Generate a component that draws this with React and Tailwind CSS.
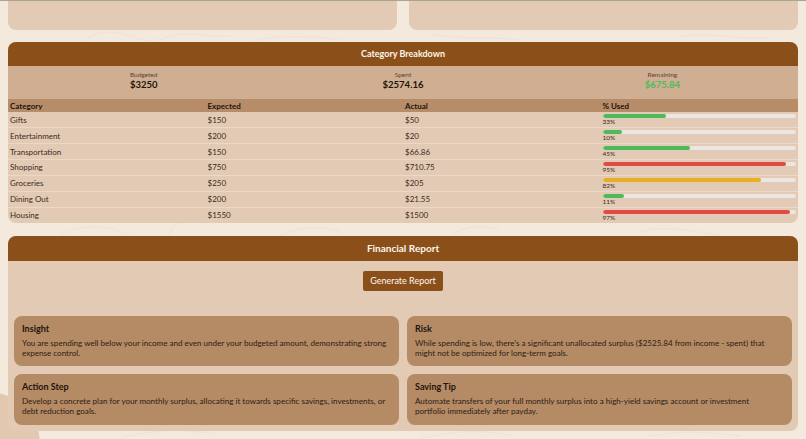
const rows = [
  { name: 'Gifts', expected: '$150', actual: '$50', pct: 33, color: 'bg-[#4dbb5c]' },
  { name: 'Entertainment', expected: '$200', actual: '$20', pct: 10, color: 'bg-[#4dbb5c]' },
  { name: 'Transportation', expected: '$150', actual: '$66.86', pct: 45, color: 'bg-[#4dbb5c]' },
  { name: 'Shopping', expected: '$750', actual: '$710.75', pct: 95, color: 'bg-[#e04b45]' },
  { name: 'Groceries', expected: '$250', actual: '$205', pct: 82, color: 'bg-[#e6b022]' },
  { name: 'Dining Out', expected: '$200', actual: '$21.55', pct: 11, color: 'bg-[#4dbb5c]' },
  { name: 'Housing', expected: '$1550', actual: '$1500', pct: 97, color: 'bg-[#e04b45]' },
]

const tips = [
  { title: 'Insight', text: 'You are spending well below your income and even under your budgeted amount, demonstrating strong expense control.' },
  { title: 'Risk', text: "While spending is low, there's a significant unallocated surplus ($2525.84 from income - spent) that might not be optimized for long-term goals." },
  { title: 'Action Step', text: 'Develop a concrete plan for your monthly surplus, allocating it towards specific savings, investments, or debt reduction goals.' },
  { title: 'Saving Tip', text: 'Automate transfers of your full monthly surplus into a high-yield savings account or investment portfolio immediately after payday.' },
]

function Summary({ label, value, green }) {
  return (
    <div className="text-center">
      <div className="text-[6.5px] leading-[9px] text-[#5a4634]">{label}</div>
      <div className={`text-[9.5px] leading-[12px] font-bold ${green ? 'text-[#4dbb5c]' : 'text-[#1e140c]'}`}>{value}</div>
    </div>
  )
}

export default function App() {
  return (
    <div className="relative h-[439px] overflow-hidden bg-[#f3e9dc] font-['Lato',sans-serif] text-[#3a2a1c]">
      <div className="absolute left-[-64px] top-[392px] h-[120px] w-[104px] rounded-full bg-[#e3c8b0]" />
      <svg className="absolute inset-0" width="806" height="439" fill="none" stroke="#efe3d5" strokeWidth="1">
        <path d="M85 42c10-12 30-12 45-6s30 6 40 0M170 36c20-6 40 2 60 0M250 42c30-8 60-6 90-2" />
        <path d="M60 236c14-12 50-12 70 0M170 236c0-6 4-10 8-13M280 236c20-10 45-10 60-4" />
        <path d="M430 34c30 6 60 2 90 6M680 36c30-4 60 4 90 2" />
        <path d="M450 236c15-10 30-12 50-6M640 232c25-8 60 0 80 4" />
        <path d="M120 439c30-10 60-10 90-6M420 439c30-8 60-10 90-4M650 436c30-6 60-4 90 0" />
      </svg>
      <div className="relative px-2">
        <div className="absolute left-0 right-0 top-0 border-t border-[#a8a595]" />
        <div className="grid grid-cols-2 gap-3">
          <div className="h-[30px] rounded-b-lg bg-[#e2cab5]" />
          <div className="h-[30px] rounded-b-lg bg-[#e2cab5]" />
        </div>

        <section className="mt-3 overflow-hidden rounded-lg bg-[#e2cab5]">
          <div className="flex h-6 items-center justify-center bg-[#8b5019] text-[9px] font-bold text-[#fdf6ee]">Category Breakdown</div>
          <div className="grid h-[33px] grid-cols-3 items-center bg-[#cfae91] px-1.5 pb-1">
            <Summary label="Budgeted" value="$3250" />
            <Summary label="Spent" value="$2574.16" />
            <Summary label="Remaining" value="$675.84" green />
          </div>
          <table className="w-full table-fixed border-collapse text-[8px]">
            <thead>
              <tr className="h-[13px] bg-[#b68d68] text-left text-[#1e140c]">
                <th className="px-0.5 font-bold">Category</th>
                <th className="px-0.5 font-bold">Expected</th>
                <th className="px-0.5 font-bold">Actual</th>
                <th className="px-0.5 font-bold">% Used</th>
              </tr>
            </thead>
            <tbody>
              {rows.map((r) => (
                <tr key={r.name} className="h-[15.85px] border-b border-[#ead9c9] last:border-b-0">
                  <td className="px-0.5">{r.name}</td>
                  <td className="px-0.5">{r.expected}</td>
                  <td className="px-0.5">{r.actual}</td>
                  <td className="px-0.5">
                    <div className="h-1 overflow-hidden rounded-full bg-[#ebe6e2]">
                      <div className={`h-full rounded-full ${r.color}`} style={{ width: `${r.pct}%` }} />
                    </div>
                    <div className="text-[6.5px] leading-[7px]">{r.pct}%</div>
                  </td>
                </tr>
              ))}
            </tbody>
          </table>
        </section>

        <section className="mt-[13px] overflow-hidden rounded-lg bg-[#e2cab5]">
          <div className="flex h-[25px] items-center justify-center bg-[#8b5019] text-[10px] font-bold text-[#fdf6ee]">Financial Report</div>
          <div className="flex justify-center pt-2.5">
            <button className="flex h-5 w-[80px] items-center justify-center rounded-[2px] bg-[#8b5019] text-[9px] text-[#fdf6ee]">Generate Report</button>
          </div>
          <div className="mt-[25px] grid grid-cols-2 gap-2 px-1.5 pb-1.5">
            {tips.map((t) => (
              <div key={t.title} className="h-[50.5px] rounded-lg bg-[#b48b65] pl-2 pr-[11px] pt-[7px]">
                <div className="text-[9px] leading-[11px] font-bold text-[#1e140c]">{t.title}</div>
                <p className="mt-1 text-[8.07px] leading-[10px] text-[#2e2014]">{t.text}</p>
              </div>
            ))}
          </div>
        </section>
      </div>
    </div>
  )
}
